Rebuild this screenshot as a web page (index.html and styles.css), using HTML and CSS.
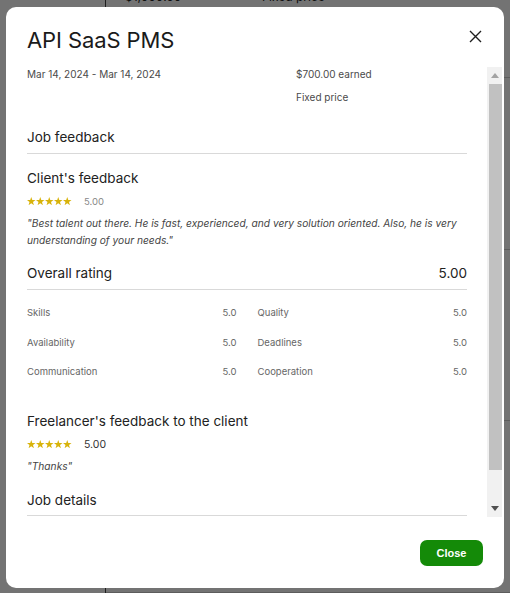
FILE: index.html
```html
<!DOCTYPE html>
<html>
<head>
<meta charset="utf-8">
<link rel="stylesheet" href="styles.css">
</head>
<body>
<div class="page">
  <aside class="sidebar"></aside>
  <main class="main">
    <div class="bg-row bg-row-top"><span class="bg-amount">$1,000.00</span><span class="bg-type">Fixed price</span></div>
    <div class="bg-row"></div>
    <div class="bg-row"></div>
    <div class="bg-row"></div>
  </main>
</div>
<div class="overlay"></div>
<div class="modal">
  <header class="modal-header">
    <h1 class="title">API SaaS PMS</h1>
    <button class="close-x" aria-label="Close">
      <svg width="13" height="13" viewBox="0 0 13 13"><path d="M1 1 L12 12 M12 1 L1 12" stroke="#1f1f1f" stroke-width="1.4" fill="none"/></svg>
    </button>
  </header>
  <div class="body-wrap">
    <div class="scroll">
      <div class="info">
        <div class="info-col"><div class="info-line">Mar 14, 2024 - Mar 14, 2024</div></div>
        <div class="info-col info-right">
          <div class="info-line">$700.00 earned</div>
          <div class="info-line">Fixed price</div>
        </div>
      </div>

      <h2 class="section-title">Job feedback</h2>

      <h3 class="sub-title">Client's feedback</h3>
      <div class="stars-row">
        <span class="stars">
          <svg viewBox="0 0 45 8.5" width="45" height="8.5">
            <g fill="#d8b30a">
              <polygon points="4.25,0 5.3,2.9 8.5,3 6,4.9 6.9,8.2 4.25,6.3 1.6,8.2 2.5,4.9 0,3 3.2,2.9"/>
              <polygon transform="translate(9,0)" points="4.25,0 5.3,2.9 8.5,3 6,4.9 6.9,8.2 4.25,6.3 1.6,8.2 2.5,4.9 0,3 3.2,2.9"/>
              <polygon transform="translate(18,0)" points="4.25,0 5.3,2.9 8.5,3 6,4.9 6.9,8.2 4.25,6.3 1.6,8.2 2.5,4.9 0,3 3.2,2.9"/>
              <polygon transform="translate(27,0)" points="4.25,0 5.3,2.9 8.5,3 6,4.9 6.9,8.2 4.25,6.3 1.6,8.2 2.5,4.9 0,3 3.2,2.9"/>
              <polygon transform="translate(36,0)" points="4.25,0 5.3,2.9 8.5,3 6,4.9 6.9,8.2 4.25,6.3 1.6,8.2 2.5,4.9 0,3 3.2,2.9"/>
            </g>
          </svg>
        </span>
        <span class="score score-muted">5.00</span>
      </div>
      <p class="quote">"Best talent out there. He is fast, experienced, and very solution oriented. Also, he is very understanding of your needs."</p>

      <div class="overall">
        <span>Overall rating</span>
        <span>5.00</span>
      </div>
      <div class="grid">
        <div class="cell"><span>Skills</span><span>5.0</span></div>
        <div class="cell"><span>Quality</span><span>5.0</span></div>
        <div class="cell"><span>Availability</span><span>5.0</span></div>
        <div class="cell"><span>Deadlines</span><span>5.0</span></div>
        <div class="cell"><span>Communication</span><span>5.0</span></div>
        <div class="cell"><span>Cooperation</span><span>5.0</span></div>
      </div>

      <h3 class="sub-title sub-free">Freelancer's feedback to the client</h3>
      <div class="stars-row">
        <span class="stars">
          <svg viewBox="0 0 45 8.5" width="45" height="8.5">
            <g fill="#d8b30a">
              <polygon points="4.25,0 5.3,2.9 8.5,3 6,4.9 6.9,8.2 4.25,6.3 1.6,8.2 2.5,4.9 0,3 3.2,2.9"/>
              <polygon transform="translate(9,0)" points="4.25,0 5.3,2.9 8.5,3 6,4.9 6.9,8.2 4.25,6.3 1.6,8.2 2.5,4.9 0,3 3.2,2.9"/>
              <polygon transform="translate(18,0)" points="4.25,0 5.3,2.9 8.5,3 6,4.9 6.9,8.2 4.25,6.3 1.6,8.2 2.5,4.9 0,3 3.2,2.9"/>
              <polygon transform="translate(27,0)" points="4.25,0 5.3,2.9 8.5,3 6,4.9 6.9,8.2 4.25,6.3 1.6,8.2 2.5,4.9 0,3 3.2,2.9"/>
              <polygon transform="translate(36,0)" points="4.25,0 5.3,2.9 8.5,3 6,4.9 6.9,8.2 4.25,6.3 1.6,8.2 2.5,4.9 0,3 3.2,2.9"/>
            </g>
          </svg>
        </span>
        <span class="score">5.00</span>
      </div>
      <p class="quote quote-short">"Thanks"</p>

      <h2 class="section-title section-details">Job details</h2>
    </div>
    <div class="scrollbar" aria-hidden="true">
      <div class="sb-btn">
        <svg width="8" height="5" viewBox="0 0 8 5"><polygon points="4,0 8,5 0,5" fill="#a3a3a3"/></svg>
      </div>
      <div class="sb-track">
        <div class="sb-thumb"></div>
      </div>
      <div class="sb-btn">
        <svg width="8" height="5" viewBox="0 0 8 5"><polygon points="0,0 8,0 4,5" fill="#505050"/></svg>
      </div>
    </div>
  </div>
  <footer class="modal-footer">
    <button class="btn-close">Close</button>
  </footer>
</div>
</body>
</html>
```

FILE: styles.css
```css
* { box-sizing: border-box; }
html, body { margin: 0; padding: 0; }
body {
  width: 510px;
  height: 593px;
  overflow: hidden;
  background: #fff;
  font-family: Inter, "Liberation Sans", Arial, sans-serif;
  color: #222;
}

.page { display: flex; height: 593px; }
.sidebar { width: 106px; border-right: 1px solid #444; }
.main { flex: 1; display: flex; flex-direction: column; }
.bg-row { height: 250px; border-bottom: 1px solid #ccc; font-size: 12px; color: #222; }
.bg-row-top { height: 78px; display: flex; align-items: flex-end; padding-bottom: 73px; }
.bg-amount { margin-left: 19px; width: 137px; }

.overlay { position: fixed; inset: 0; background: rgba(0, 0, 0, 0.55); }

.modal {
  position: absolute;
  left: 6px;
  top: 7px;
  width: 498px;
  height: 581px;
  background: #fff;
  border-radius: 10px;
  display: flex;
  flex-direction: column;
}

.modal-header {
  display: flex;
  justify-content: space-between;
  align-items: flex-start;
  padding: 18px 22px 0 21px;
  height: 60px;
}
.title {
  margin: 0;
  font-size: 22px;
  font-weight: 400;
  line-height: 30px;
  letter-spacing: -0.1px;
  color: #1a1a1a;
}
.close-x {
  border: 0;
  background: none;
  padding: 0;
  margin-top: 5px;
  width: 13px;
  height: 13px;
  display: flex;
}

.body-wrap {
  display: flex;
  height: 450px;
  margin-left: 21px;
  margin-right: 2px;
}
.scroll {
  flex: 1;
  overflow: hidden;
  padding-right: 20px;
}

.scrollbar {
  width: 15px;
  display: flex;
  flex-direction: column;
  background: #f1f1f1;
}
.sb-btn {
  height: 17px;
  display: flex;
  align-items: center;
  justify-content: center;
}
.sb-track { flex: 1; padding-left: 2px; }
.sb-thumb { height: 386px; background: #c1c1c1; }

.info { display: flex; }
.info-col { display: flex; flex-direction: column; gap: 9px; }
.info-col:first-child { width: 269px; }
.info-line { font-size: 10px; line-height: 14px; color: #4a4a4a; }

.section-title {
  margin: 23px 0 0;
  font-size: 13.5px;
  font-weight: 400;
  line-height: 20px;
  color: #222;
  padding-bottom: 6px;
  border-bottom: 1px solid #d9d9d9;
}
.section-details { margin-top: 17px; padding-bottom: 5px; }

.sub-title {
  margin: 14px 0 0;
  font-size: 13.5px;
  font-weight: 400;
  line-height: 20px;
  color: #222;
}
.sub-free { margin-top: 32px; }

.stars-row { display: flex; align-items: center; height: 12px; margin-top: 7px; }
.stars { display: flex; width: 57px; }
.score { font-size: 10.5px; color: #333; }
.score-muted { font-size: 9.5px; color: #888; }

.quote {
  margin: 8px 0 0;
  font-size: 10.2px;
  line-height: 17px;
  font-style: italic;
  color: #444;
}
.quote-short { margin-top: 9px; line-height: 14px; }

.overall {
  display: flex;
  justify-content: space-between;
  margin-top: 14px;
  font-size: 13.5px;
  line-height: 20px;
  color: #222;
  padding-bottom: 6px;
  border-bottom: 1px solid #d9d9d9;
}

.grid {
  display: grid;
  grid-template-columns: 1fr 1fr;
  column-gap: 21px;
  row-gap: 15.5px;
  margin-top: 16px;
}
.cell {
  display: flex;
  justify-content: space-between;
  font-size: 9.5px;
  line-height: 14px;
  color: #666;
}

.modal-footer {
  display: flex;
  justify-content: flex-end;
  padding: 23px 21px 0 0;
}
.btn-close {
  width: 63px;
  height: 26px;
  border: 0;
  border-radius: 7px;
  background: #148a08;
  color: #fff;
  font-family: "Liberation Sans", Arial, sans-serif;
  font-weight: 700;
  font-size: 11px;
}
```
